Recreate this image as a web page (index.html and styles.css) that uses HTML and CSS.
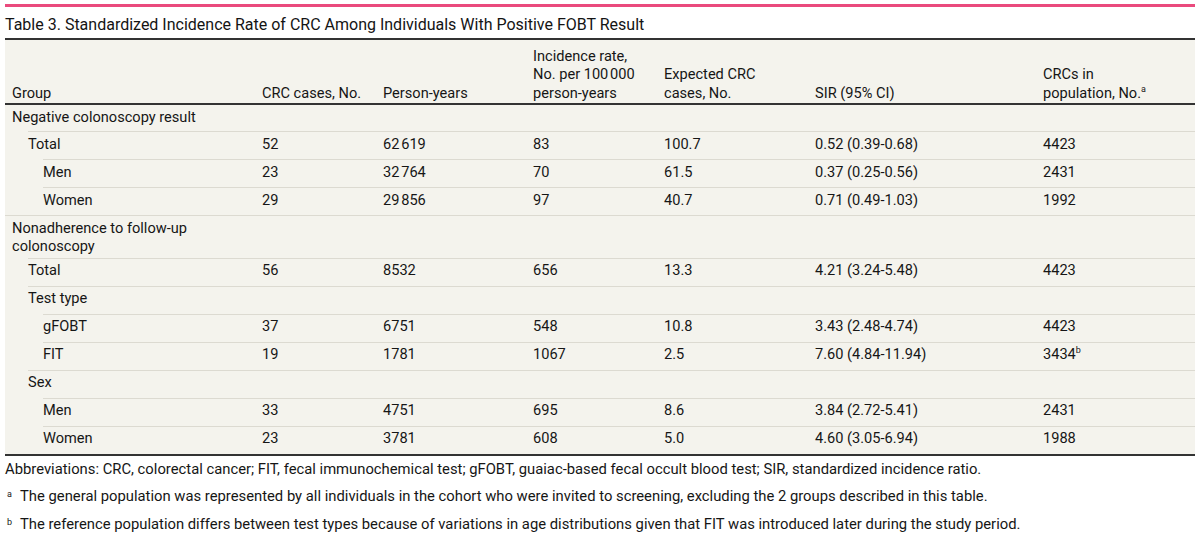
FILE: index.html
```html
<!DOCTYPE html>
<html lang="en">
<head>
<meta charset="utf-8">
<title>Table 3</title>
<link rel="stylesheet" href="styles.css">
</head>
<body>
<div class="page">
  <div class="rule"></div>
  <h1 class="title">Table 3. Standardized Incidence Rate of CRC Among Individuals With Positive FOBT Result</h1>
  <table class="data">
    <colgroup>
      <col class="c-group"><col class="c-cases"><col class="c-py"><col class="c-rate"><col class="c-exp"><col class="c-sir"><col class="c-pop">
    </colgroup>
    <thead>
      <tr>
        <th>Group</th>
        <th>CRC cases, No.</th>
        <th>Person-years</th>
        <th>Incidence rate,<br>No. per 100&#8239;000<br>person-years</th>
        <th>Expected CRC<br>cases, No.</th>
        <th>SIR (95% CI)</th>
        <th>CRCs in<br>population, No.<sup>a</sup></th>
      </tr>
    </thead>
    <tbody>
      <tr class="first">
        <td class="l0">Negative colonoscopy result</td><td></td><td></td><td></td><td></td><td></td><td></td>
      </tr>
      <tr>
        <td class="l1">Total</td><td>52</td><td>62&#8239;619</td><td>83</td><td>100.7</td><td>0.52 (0.39-0.68)</td><td>4423</td>
      </tr>
      <tr>
        <td class="l2">Men</td><td>23</td><td>32&#8239;764</td><td>70</td><td>61.5</td><td>0.37 (0.25-0.56)</td><td>2431</td>
      </tr>
      <tr>
        <td class="l2">Women</td><td>29</td><td>29&#8239;856</td><td>97</td><td>40.7</td><td>0.71 (0.49-1.03)</td><td>1992</td>
      </tr>
      <tr class="two">
        <td class="l0">Nonadherence to follow-up<br>colonoscopy</td><td></td><td></td><td></td><td></td><td></td><td></td>
      </tr>
      <tr>
        <td class="l1">Total</td><td>56</td><td>8532</td><td>656</td><td>13.3</td><td>4.21 (3.24-5.48)</td><td>4423</td>
      </tr>
      <tr>
        <td class="l1">Test type</td><td></td><td></td><td></td><td></td><td></td><td></td>
      </tr>
      <tr>
        <td class="l2">gFOBT</td><td>37</td><td>6751</td><td>548</td><td>10.8</td><td>3.43 (2.48-4.74)</td><td>4423</td>
      </tr>
      <tr>
        <td class="l2">FIT</td><td>19</td><td>1781</td><td>1067</td><td>2.5</td><td>7.60 (4.84-11.94)</td><td>3434<sup>b</sup></td>
      </tr>
      <tr>
        <td class="l1">Sex</td><td></td><td></td><td></td><td></td><td></td><td></td>
      </tr>
      <tr>
        <td class="l2">Men</td><td>33</td><td>4751</td><td>695</td><td>8.6</td><td>3.84 (2.72-5.41)</td><td>2431</td>
      </tr>
      <tr>
        <td class="l2">Women</td><td>23</td><td>3781</td><td>608</td><td>5.0</td><td>4.60 (3.05-6.94)</td><td>1988</td>
      </tr>
    </tbody>
  </table>
  <div class="notes">
    <p class="abbr">Abbreviations: CRC, colorectal cancer; FIT, fecal immunochemical test; gFOBT, guaiac-based fecal occult blood test; SIR, standardized incidence ratio.</p>
    <p class="fn"><sup>a</sup><span>The general population was represented by all individuals in the cohort who were invited to screening, excluding the 2 groups described in this table.</span></p>
    <p class="fn"><sup>b</sup><span>The reference population differs between test types because of variations in age distributions given that FIT was introduced later during the study period.</span></p>
  </div>
</div>
</body>
</html>
```
FILE: styles.css
```css
html, body {
  margin: 0;
  padding: 0;
  background: #ffffff;
}

body {
  font-family: Roboto, "Liberation Sans", sans-serif;
  color: #161616;
}

.page {
  padding: 4px 4px 0 5px;
}

.rule {
  height: 3px;
  background: #ea4a7d;
}

.title {
  margin: 8px 0 3px 0;
  font-size: 16px;
  line-height: 20px;
  font-weight: 400;
  color: #141414;
}

.data {
  width: 1190px;
  border-collapse: separate;
  border-spacing: 0;
  background: #f4f3ed;
  border-top: 2px solid #333333;
  border-bottom: 2px solid #333333;
  table-layout: fixed;
  font-size: 14.6px;
}

.c-group { width: 250px; }
.c-cases { width: 121px; }
.c-py { width: 150px; }
.c-rate { width: 131px; }
.c-exp { width: 151px; }
.c-sir { width: 228px; }
.c-pop { width: 159px; }

.data th {
  text-align: left;
  vertical-align: bottom;
  font-weight: 400;
  line-height: 18.5px;
  padding: 6.5px 7px 1px 7px;
  border-bottom: 2px solid #333333;
}

.data td {
  line-height: 18px;
  padding: 3.6px 7px 6.4px 7px;
  vertical-align: top;
  background-image: linear-gradient(#dcdad1, #dcdad1);
  background-repeat: no-repeat;
  background-size: 100% 1px;
  background-position: right top;
}

.data tr.first td {
  background-image: none;
  padding-top: 3px;
  padding-bottom: 5px;
}

.data tr.two td {
  padding-top: 3.8px;
  padding-bottom: 3px;
}

.data td.l0 { padding-left: 7px; }
.data td.l1 { padding-left: 23px; background-size: calc(100% - 23px) 1px; }
.data td.l2 { padding-left: 38px; background-size: calc(100% - 38px) 1px; }

sup {
  font-size: 9px;
  line-height: 0;
  vertical-align: 6px;
}

.notes {
  font-size: 14.8px;
  line-height: 18px;
  padding-top: 4px;
}

.notes p {
  margin: 0 0 9.5px 0;
}

.fn {
  display: flex;
  gap: 3px;
  padding-left: 2px;
}

.fn sup {
  display: inline-block;
  width: 10px;
  line-height: 14px;
  vertical-align: top;
}
```
